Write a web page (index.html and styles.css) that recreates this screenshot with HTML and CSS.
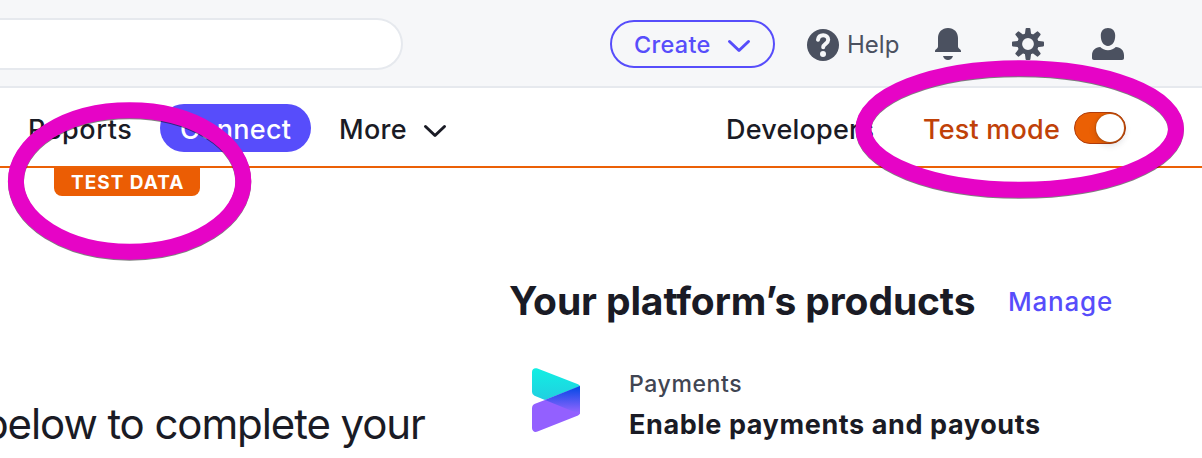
FILE: index.html
```html
<!DOCTYPE html>
<html lang="en">
<head>
<meta charset="utf-8">
<title>Dashboard</title>
<link rel="stylesheet" href="styles.css">
</head>
<body>
<header class="topbar">
  <div class="search"></div>
  <button class="create"><span class="create-label">Create</span><svg class="chevron" viewBox="0 0 24 14"><path d="M2.500 2.500 12 11.500 21.500 2.500"/></svg></button>
  <a class="help">
    <svg class="icon help-icon" viewBox="0 0 32 32"><circle cx="16" cy="16" r="16" fill="#4b5160"/><path d="M11 10.800C11.400 8 13.400 6.200 16.200 6.200c2.900 0 5 1.900 5 4.600 0 4-5 4-5 7.400" fill="none" stroke="#f6f7f9" stroke-width="4" stroke-linecap="round"/><circle cx="16" cy="25" r="3" fill="#f6f7f9"/></svg>
    <span class="help-label">Help</span>
  </a>
  <svg class="icon bell" viewBox="0 0 32 32"><path d="M16 0c6 0 10 4.200 10 10v8.500c0 .8.300 1.300 1 1.900 1.300 1 2 1.600 2 2.600v1H3v-1c0-1 .7-1.600 2-2.600.7-.6 1-1.100 1-1.900V10C6 4.200 10 0 16 0zM11 28h10c-.8 2.600-2.500 4-5 4s-4.200-1.400-5-4z"/></svg>
  <svg class="icon gear" viewBox="0 0 32 32">
    <defs><path id="tooth" d="M12.800 7 13.600.8q.1-.8.900-.8h3q.8 0 .9.800L19.200 7z"/></defs>
    <circle cx="16" cy="16" r="8.300" fill="none" stroke="#4b5160" stroke-width="4.800"/>
    <use href="#tooth"/><use href="#tooth" transform="rotate(45 16 16)"/><use href="#tooth" transform="rotate(90 16 16)"/><use href="#tooth" transform="rotate(135 16 16)"/><use href="#tooth" transform="rotate(180 16 16)"/><use href="#tooth" transform="rotate(225 16 16)"/><use href="#tooth" transform="rotate(270 16 16)"/><use href="#tooth" transform="rotate(315 16 16)"/>
  </svg>
  <svg class="icon user" viewBox="0 0 32 32"><path d="M16 0c4.500 0 7.200 3 7.200 7.600C23.200 13.600 20.500 18 16 18s-7.200-4.400-7.200-10.400C8.800 3 11.500 0 16 0zM8.200 19c1.800 2 4.600 3.200 7.800 3.200s6-1.200 7.800-3.200c5 .4 8.200 3.400 8.200 8.200V30c0 1.300-.7 2-2 2H2c-1.300 0-2-.7-2-2v-2.800C0 22.400 3.200 19.400 8.200 19z"/></svg>
</header>
<nav class="nav">
  <a class="reports">Reports</a>
  <a class="connect"><span class="connect-label">Connect</span></a>
  <a class="more">More</a>
  <svg class="chevron dark" viewBox="0 0 24 14"><path d="M2.500 2.500 12 11.500 21.500 2.500"/></svg>
  <a class="developers">Developers</a>
  <span class="test-mode">Test mode</span>
  <span class="toggle"><span class="knob"></span></span>
</nav>
<div class="test-data"><span class="test-label">TEST DATA</span></div>
<main class="content">
  <section class="intro"><p class="intro-text">below to complete your</p></section>
  <section class="products">
    <div class="heading-row"><h2 class="heading">Your platform’s products</h2><a class="manage">Manage</a></div>
    <div class="product">
      <svg class="logo" viewBox="0 0 48 64">
        <defs>
          <linearGradient id="teal" x1="0" y1="0" x2="0" y2="32" gradientUnits="userSpaceOnUse"><stop stop-color="#11efe3"/><stop offset="1" stop-color="#21cfe0"/></linearGradient>
          <linearGradient id="blue" x1="0" y1="18" x2="0" y2="46" gradientUnits="userSpaceOnUse"><stop stop-color="#0048e5"/><stop offset="1" stop-color="#9966ff"/></linearGradient>
        </defs>
        <path fill="url(#teal)" d="M0 4C0 1 2.500-.6 5.500.5L46 16.200q2 .8 2 2.300L13 32 2.500 27.700Q0 26.500 0 24z"/>
        <path fill="#9360ff" d="M0 40.500Q0 37 3 35.800L13 32 48 18v26.500q0 2.200-2 3L5.500 63.600C2.500 64.700 0 63 0 60z"/>
        <path fill="url(#blue)" d="M13 32 48 18v27.500q0 .5-.6.400z"/>
      </svg>
      <div class="product-copy"><div class="product-name">Payments</div><div class="product-title">Enable payments and payouts</div></div>
    </div>
  </section>
</main>
<svg class="marks" viewBox="0 0 1202 458">
  <ellipse cx="129.600" cy="181" rx="113.700" ry="70.700"/>
  <ellipse cx="1019.700" cy="129" rx="156.300" ry="60.700"/>
</svg>
</body>
</html>
```
FILE: styles.css
```css
* { box-sizing: border-box; }
body { margin: 0; width: 1202px; height: 458px; overflow: hidden; position: relative; background: #fff; color: #1a1b25; font-family: Inter, "Liberation Sans", sans-serif; white-space: nowrap; }
.topbar { height: 88px; display: flex; align-items: center; padding-top: 2px; background: #f6f7f9; border-bottom: 2px solid #e6e9ee; }
.search { width: 403px; height: 52px; border: 2px solid #e6e9ee; border-left: 0; border-radius: 0 26px 26px 0; background: #fff; flex: none; }
.create { width: 165px; height: 48px; margin: 0 0 0 207px; padding: 0 22px; display: flex; align-items: center; flex: none; border: 2px solid #574dfb; border-radius: 24px; background: transparent; color: #574dfb; font: 500 24px/48px Inter, sans-serif; }
.create-label { width: 94px; padding-top: 2px; text-align: left; font-weight: 450; font-size: 23.500px; letter-spacing: .3px; }
.chevron { width: 24px; height: 14px; flex: none; fill: none; stroke: #574dfb; stroke-width: 3; stroke-linecap: round; stroke-linejoin: round; margin-top: 3px; }
.help { width: 94px; margin-left: 32px; display: flex; align-items: center; flex: none; color: #4b5160; }
.help-label { margin-left: 8px; padding-top: 2px; font-size: 24px; line-height: 30px; font-weight: 430; letter-spacing: 0; }
.icon { width: 32px; height: 32px; flex: none; fill: #4b5160; }
.help-icon { margin-top: 1px; }
.bell { margin-left: 31px; }
.gear, .user { margin-left: 48px; }
.nav { height: 80px; display: flex; align-items: center; padding-top: 2px; border-bottom: 2px solid #eb6006; font-size: 27px; line-height: 48px; font-weight: 450; letter-spacing: .3px; }
.reports { width: 132px; padding: 4px 0 0 28px; flex: none; letter-spacing: .55px; }
.connect { width: 151px; height: 48px; margin: -1px 0 0 28px; padding: 2px 0 0 20px; border-radius: 24px; background: #574dfb; color: #fff; flex: none; }
.more { width: 84px; margin-left: 28px; padding-top: 4px; flex: none; }
.dark { stroke: #1a1b25; margin-top: 5px; }
.developers { width: 149px; margin-left: 279px; padding-top: 4px; flex: none; letter-spacing: .2px; }
.test-mode { width: 138px; margin-left: 48px; padding-top: 4px; color: #c04108; flex: none; letter-spacing: .2px; }
.toggle { width: 52px; height: 32px; margin-left: 13px; padding-right: 1px; display: flex; align-items: center; justify-content: flex-end; border: 1.500px solid #b13c0b; border-radius: 16px; background: #eb6004; flex: none; }
.knob { width: 28px; height: 28px; border-radius: 50%; background: #fff; box-shadow: 0 3px 7px rgba(40,40,60,.18), 0 0 2px rgba(110,50,0,.8); }
.test-data { width: 146px; height: 28px; margin-left: 54px; padding-left: 17px; border-radius: 0 0 8px 8px; background: #eb5d04; color: #fff; font-size: 19px; line-height: 30px; font-weight: 650; letter-spacing: 1px; }
.content { display: flex; height: 262px; }
.intro { width: 510px; padding-top: 201px; flex: none; }
.intro-text { margin: 0 0 0 -17px; font-size: 42px; line-height: 54px; letter-spacing: -1.100px; }
.products { padding-top: 78px; }
.heading-row { display: flex; align-items: center; height: 54px; }
.heading { width: 499px; margin: 0 0 0 -1px; font-size: 39px; line-height: 54px; font-weight: 700; letter-spacing: -.120px; }
.manage { padding-top: 2px; color: #574dfb; font-size: 26px; line-height: 54px; font-weight: 450; letter-spacing: .8px; }
.product { display: flex; margin: 40px 0 0 22px; }
.logo { width: 48px; height: 64px; flex: none; }
.product-copy { margin-left: 49px; }
.product-name { color: #414552; font-size: 23px; line-height: 32px; font-weight: 450; letter-spacing: .6px; }
.product-title { margin-top: 9px; font-size: 27px; line-height: 32px; font-weight: 700; letter-spacing: .6px; }
.marks { position: absolute; inset: 0; width: 1202px; height: 458px; fill: none; stroke: #e604c6; stroke-width: 16; filter: drop-shadow(0 1px .5px rgba(0,0,0,.5)); pointer-events: none; }
```
